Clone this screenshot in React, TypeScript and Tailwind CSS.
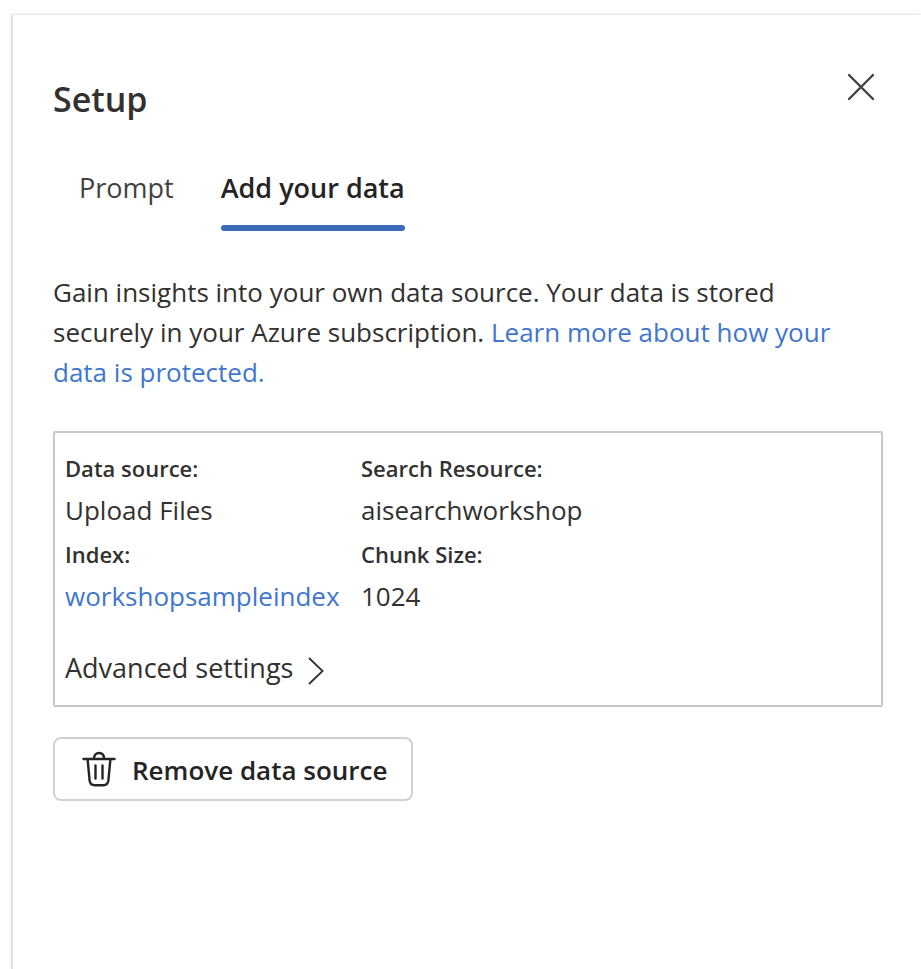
import React, { useState } from "react";

type Field = { label: string; value: string; href?: string };

const fields: Field[] = [
  { label: "Data source:", value: "Upload Files" },
  { label: "Search Resource:", value: "aisearchworkshop" },
  { label: "Index:", value: "workshopsampleindex", href: "#index" },
  { label: "Chunk Size:", value: "1024" },
];

function CloseIcon() {
  return (
    <svg width="28" height="28" viewBox="0 0 28 28" fill="none" stroke="#424242" strokeWidth="2.4" strokeLinecap="round" aria-hidden="true">
      <path d="M2 2L26 26M26 2L2 26" />
    </svg>
  );
}

function ChevronIcon() {
  return (
    <svg width="16" height="28" viewBox="0 0 16 28" fill="none" stroke="#323130" strokeWidth="1.8" aria-hidden="true">
      <path d="M1 1L14.6 14L1 27" />
    </svg>
  );
}

function TrashIcon() {
  return (
    <svg width="34" height="36" viewBox="0 0 34 36" fill="none" stroke="#242424" strokeWidth="2.4" strokeLinecap="round" strokeLinejoin="round" aria-hidden="true">
      <path d="M1.5 8H32.5M12 7.6C12 4 14 2 17 2S22 4 22 7.6" />
      <path d="M5.6 8.2L7.6 29.4C8 32.6 9.8 34.2 12.6 34.2H21.4C24.2 34.2 26 32.6 26.4 29.4L28.4 8.2" />
      <path d="M13.5 14.5V27.5M20.5 14.5V27.5" />
    </svg>
  );
}

function Tab({ label, active, onClick }: { label: string; active: boolean; onClick: () => void }) {
  return (
    <button
      type="button"
      role="tab"
      aria-selected={active}
      onClick={onClick}
      className={
        active
          ? "flex flex-col gap-[17px] text-[27px] leading-10 font-semibold text-[#242424]"
          : "flex flex-col gap-[17px] text-[27px] leading-10 text-[#424242]"
      }
    >
      {label}
      <span className={active ? "h-1.5 w-full rounded-full bg-[#3a6bb8]" : "h-1.5 w-full"} />
    </button>
  );
}

export default function App() {
  const [tab, setTab] = useState("Add your data");
  return (
    <div className="flex min-h-screen flex-col bg-white pt-[15px] pl-[11px] font-['Open_Sans','Noto_Sans',sans-serif] text-[26px] leading-10 text-[#323130]">
      <main className="grow border-l-2 border-[#e0e0e0] pr-[38px] pb-10 pl-10 shadow-[0_-1px_2px_rgba(0,0,0,0.12)]">
        <header className="flex items-start justify-between pt-[58px] pr-2">
          <h1 className="text-[34px] leading-[52px] font-semibold">Setup</h1>
          <button type="button" aria-label="Close">
            <CloseIcon />
          </button>
        </header>

        <div role="tablist" className="mt-[43px] flex gap-[47px] pl-[26px]">
          {["Prompt", "Add your data"].map((name) => (
            <Tab key={name} label={name} active={tab === name} onClick={() => setTab(name)} />
          ))}
        </div>

        <p className="mt-[41px] pr-6">
          Gain insights into your own data source. Your data is stored securely in your Azure subscription.{" "}
          <a href="#learn" className="text-[#3f76d0]">
            Learn more about how your data is protected.
          </a>
        </p>

        <section className="mt-[39px] rounded-xs border-2 border-[#c8c8c8] px-2.5 pt-[13px] pb-[17px]">
          <dl className="grid grid-cols-[276px_1fr] gap-x-5 gap-y-0.5">
            {fields.map((f) => (
              <div key={f.label}>
                <dt className="text-[22px] leading-11 font-semibold">{f.label}</dt>
                <dd>
                  {f.href ? (
                    <a href={f.href} className="text-[#3f76d0]">
                      {f.value}
                    </a>
                  ) : (
                    f.value
                  )}
                </dd>
              </div>
            ))}
          </dl>
          <button type="button" className="mt-8 flex items-center gap-[15px] text-[27px]">
            Advanced settings
            <span className="pt-1.5">
              <ChevronIcon />
            </span>
          </button>
        </section>

        <button
          type="button"
          className="mt-[30px] flex h-16 items-center gap-4 rounded-lg border-2 border-[#d1d1d1] pr-6 pl-[27px] font-semibold text-[#242424]"
        >
          <TrashIcon />
          <span className="pt-0.5">Remove data source</span>
        </button>
      </main>
    </div>
  );
}
